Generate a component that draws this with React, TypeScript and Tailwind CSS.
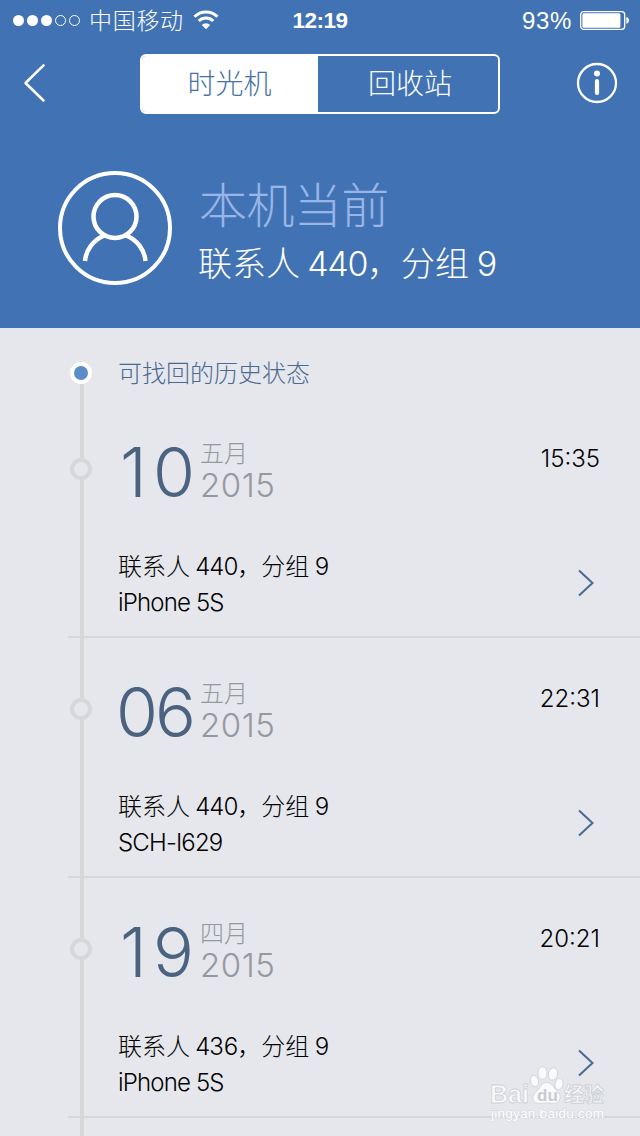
import type { ReactNode } from "react"

interface HistoryEntry {
  day: string
  month: string
  year: string
  time: string
  contacts: number
  groups: number
  device: string
}

const entries: HistoryEntry[] = [
  { day: "10", month: "五月", year: "2015", time: "15:35", contacts: 440, groups: 9, device: "iPhone 5S" },
  { day: "06", month: "五月", year: "2015", time: "22:31", contacts: 440, groups: 9, device: "SCH-I629" },
  { day: "19", month: "四月", year: "2015", time: "20:21", contacts: 436, groups: 9, device: "iPhone 5S" },
]

// Latin digits sit tighter than the CJK glyphs around them
function Latin({ children }: { children: ReactNode }) {
  return <span className="tracking-[-0.06em] tabular-nums">{children}</span>
}

function Summary({ contacts, groups }: { contacts: number; groups: number }) {
  return (
    <>
      联系人<Latin> {contacts}</Latin>，分组<Latin> {groups}</Latin>
    </>
  )
}

function StatusBar() {
  return (
    <div className="flex h-10 items-center pl-[13px] pr-[10px] text-[23px] leading-10">
      <div className="flex flex-1 items-center">
        <div className="flex gap-[3px]">
          <span className="size-[11px] rounded-full bg-white" />
          <span className="size-[11px] rounded-full bg-white" />
          <span className="size-[11px] rounded-full bg-white" />
          <span className="size-[11px] rounded-full border border-white" />
          <span className="size-[11px] rounded-full border border-white" />
        </div>
        <span className="ml-[9px] pt-[2px] tracking-[0.7px]">中国移动</span>
        <svg className="ml-[9px]" width="26" height="20" viewBox="0 0 26 20" fill="none" stroke="white" strokeWidth="3">
          <path d="M1.5 6.8a16.3 16.3 0 0 1 23 0" />
          <path d="M5.7 11a10.4 10.4 0 0 1 14.6 0" />
          <path d="M13 19.2l-4.2-4.3a6 6 0 0 1 8.4 0z" fill="white" stroke="none" />
        </svg>
      </div>
      <span className="-ml-[3px] pt-[2px] font-['Liberation_Sans',sans-serif] text-[22.5px] font-bold tracking-[-0.5px]">12:19</span>
      <div className="flex flex-1 items-center justify-end">
        <span className="pt-[2px] font-['Liberation_Sans',sans-serif] text-[24px] tracking-[0.7px]">93%</span>
        <svg className="mb-px ml-[8px]" width="50" height="20" viewBox="0 0 50 20" fill="none">
          <rect x="0.7" y="1.7" width="44" height="17.600" rx="3" stroke="white" strokeWidth="1.3" />
          <rect x="2.4" y="3.3" width="38" height="14.4" rx="1.5" fill="white" />
          <path d="M46.3 7c3.6.8 3.6 6 0 6.8z" fill="white" />
        </svg>
      </div>
    </div>
  )
}

function NavBar() {
  return (
    <nav className="flex items-center justify-between pl-[23px] pr-[22px] pt-[14px]">
      <svg className="mb-[2px]" width="24" height="40" viewBox="0 0 24 40" fill="none" stroke="white" strokeWidth="2.5" strokeLinecap="round" strokeLinejoin="round">
        <path d="M20.500 2.300L2.500 20L20.500 37.500" />
      </svg>
      <div className="ml-[16px] flex h-[60px] w-[360px] overflow-hidden rounded-md border-2 border-white text-[28px]">
        <button className="w-[176px] bg-white pb-px text-[#4673a5]">时光机</button>
        <button className="flex-1 pb-px pl-[5px]">回收站</button>
      </div>
      <svg className="mb-[2px]" width="42" height="42" viewBox="0 0 42 42" fill="none" stroke="white">
        <circle cx="21" cy="21" r="19" strokeWidth="2.3" />
        <circle cx="21" cy="11.500" r="3" fill="white" stroke="none" />
        <path d="M21 19v12" strokeWidth="4.200" strokeLinecap="round" />
      </svg>
    </nav>
  )
}

function CurrentDevice() {
  return (
    <section className="flex pl-[57px] pt-[56px]">
      <svg width="116" height="116" viewBox="0 0 116 116" fill="none" stroke="white" strokeWidth="4">
        <circle cx="58" cy="58" r="55" />
        <circle cx="58" cy="46.500" r="21.500" strokeWidth="4.500" />
        <path d="M28 91c1-11 8-21 19.500-25.500M88.500 91c-1-11-8-21-19.500-25.500" strokeWidth="4.500" />
      </svg>
      <div className="ml-[26px] mt-[6px]">
        <h1 className="text-[48px] leading-[60px] tracking-[-0.6px] text-[#98b5e8]">本机当前</h1>
        <p className="-ml-px -mt-px text-[34px] leading-[58px]">
          <Summary contacts={440} groups={9} />
        </p>
      </div>
    </section>
  )
}

function Entry({ entry }: { entry: HistoryEntry }) {
  // the narrow "1" needs extra room to keep both digits in equal columns
  const dayClass = entry.day.startsWith("1") ? "pl-[4px] tracking-[0.09em]" : "tracking-[-0.045em]"

  return (
    <li className="ml-[68px] flex h-[240px] border-b-2 border-[#d5d7da]">
      <div className="-mb-[2px] flex w-[50px] flex-col">
        <span className="ml-3 h-[60px] w-1 bg-[#d5d7d9]" />
        <span className="ml-[2px] size-[22px] rounded-full border-4 border-[#d5d7d9]" />
        <span className="ml-3 w-1 flex-1 bg-[#d5d7d9]" />
      </div>
      <div className="flex-1">
        <div className="flex h-[151px] pt-[39px]">
          <span className={`-ml-[2px] w-[84px] text-[68px] leading-[70px] text-[#4b6381] ${dayClass}`}>{entry.day}</span>
          <div className="flex flex-col text-[#96989e]">
            <span className="text-[24px] leading-[33px]">{entry.month}</span>
            <span className="text-[33px] leading-[31px] tracking-[0.5px]">{entry.year}</span>
          </div>
          <span className="ml-auto mr-[40px] mt-[7px] text-[24px] leading-[30px] text-black">{entry.time}</span>
        </div>
        <div className="flex items-center justify-between pr-[45px]">
          <div className="text-[24px] leading-9 text-black">
            <p>
              <Summary contacts={entry.contacts} groups={entry.groups} />
            </p>
            <p className="tracking-[-0.035em]">{entry.device}</p>
          </div>
          <svg className="mb-1" width="18" height="28" viewBox="0 0 18 28" fill="none" stroke="#4b6990" strokeWidth="2">
            <path d="M2 1.500L15.500 14L2 26.500" />
          </svg>
        </div>
      </div>
    </li>
  )
}

function Watermark() {
  return (
    <svg className="absolute bottom-[10px] left-[488px]" width="122" height="64" viewBox="0 0 122 64">
      <g fill="white" fillOpacity="0.8" stroke="#cdd0d5" strokeWidth="0.8">
        <ellipse cx="46.500" cy="19" rx="4" ry="5.800" transform="rotate(-12 46.500 19)" />
        <ellipse cx="54.500" cy="11" rx="4.500" ry="6.300" />
        <ellipse cx="65" cy="12" rx="4.500" ry="6.300" transform="rotate(12 65 12)" />
        <ellipse cx="71" cy="22" rx="4" ry="5.800" transform="rotate(12 71 22)" />
        <path d="M58.500 20.500c5 0 7 4.500 10 8s4.500 6 3 9.500c-2 5-8 3-13 3s-11 2-13.200-3c-1.500-4 .7-6.500 4-9.500s4.200-8 9.200-8z" />
        <text x="2" y="41" className="font-['Liberation_Sans',sans-serif] text-[26px] font-bold" textLength="39" lengthAdjust="spacingAndGlyphs">Bai</text>
        <text x="76" y="40" className="font-['Noto_Sans_CJK_SC',sans-serif] text-[20px] font-bold">经验</text>
      </g>
      <text x="49" y="39" fill="#c8cbd1" className="font-['Liberation_Sans',sans-serif] text-[17px] font-bold">du</text>
      <text x="3" y="56" fill="white" stroke="#d2d4d9" strokeWidth="0.8" paintOrder="stroke" textLength="113" className="font-['Liberation_Sans',sans-serif] text-[13.5px]">jingyan.baidu.com</text>
    </svg>
  )
}

export default function App() {
  return (
    <div className="relative h-[1136px] w-[640px] overflow-hidden bg-[#e5e7ed] font-['Inter','Noto_Sans_CJK_SC',sans-serif] font-light">
      <header className="h-[328px] bg-[#4173b4] text-white">
        <StatusBar />
        <NavBar />
        <CurrentDevice />
      </header>
      <main>
        <div className="ml-[68px] flex h-[70px]">
          <div className="flex w-[50px] flex-col pt-[34px]">
            <span className="ml-[2px] size-[22px] rounded-full border-4 border-white bg-[#5a8dc6]" />
            <span className="ml-3 w-1 flex-1 bg-[#d5d7d9]" />
          </div>
          <h2 className="pt-[28px] text-[24px] leading-9 text-[#4b6a90]">可找回的历史状态</h2>
        </div>
        <ul>
          {entries.map((entry) => (
            <Entry key={entry.day} entry={entry} />
          ))}
        </ul>
        <div className="ml-20 h-[18px] w-1 bg-[#d5d7d9]" />
      </main>
      <Watermark />
    </div>
  )
}
